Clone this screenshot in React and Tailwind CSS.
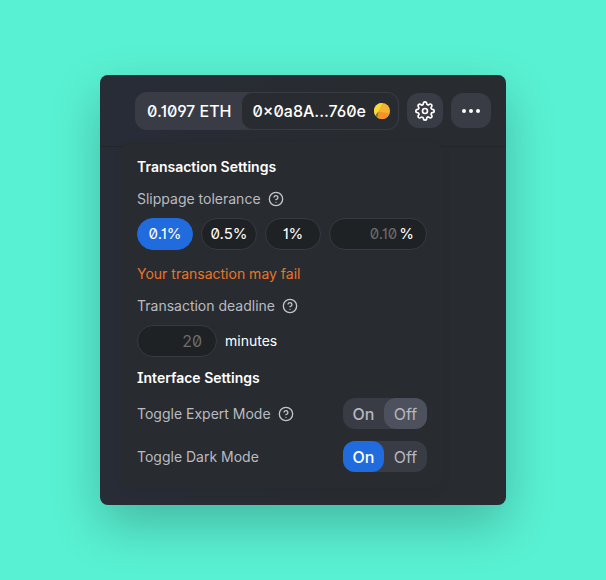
import { HelpCircle, MoreHorizontal } from "lucide-react";

function Help({ label }) {
  return (
    <button type="button" aria-label={label} className="flex size-4 items-center justify-center text-[#c3c5cb]">
      <HelpCircle size={16} strokeWidth={2} />
    </button>
  );
}

function SlippageOption({ children, active }) {
  return (
    <button
      type="button"
      aria-pressed={!!active}
      className={
        "h-8 w-14 rounded-full border text-[15px] text-white " +
        (active ? "border-[#206bdd] bg-[#206bdd]" : "border-[#373a43] bg-[#1f2224]")
      }
    >
      {children}
    </button>
  );
}

function Toggle({ on, label }) {
  return (
    <button
      type="button"
      role="switch"
      aria-checked={on}
      aria-label={label}
      className="flex h-[31px] w-[84px] rounded-xl bg-[#393c45] text-base text-[#b5b7be]"
    >
      <span
        className={
          "flex h-full w-[41px] items-center justify-center rounded-xl font-medium " +
          (on ? "bg-[#206bdd] text-white" : "")
        }
      >
        On
      </span>
      <span className={"flex h-full flex-1 items-center justify-center rounded-xl " + (on ? "" : "bg-[#4d505d]")}>
        Off
      </span>
    </button>
  );
}

function Avatar() {
  return (
    <svg viewBox="0 0 16 16" className="size-4 rounded-full" aria-hidden="true">
      <rect width="16" height="16" fill="#f3b52f" />
      <path d="M0 0H8.500L2 13L0 14Z" fill="#f6dc32" />
      <path d="M4.500 8.500L16 10.500V16H3Z" fill="#f7922a" />
      <path d="M0 14L4.500 8.500L3 16H0Z" fill="#5e7a3c" />
    </svg>
  );
}

export default function App() {
  return (
    <div className="min-h-screen bg-[#59f1d3] px-[100px] py-[75px] font-['Inter',sans-serif] [font-feature-settings:'zero','ss01','cv01','cv08']">
      <div className="overflow-hidden rounded-lg bg-[#282b2f] bg-linear-to-r from-[#272c37] from-0% to-[#282b2f] to-70% pb-[17px] shadow-[0_20px_50px_rgba(0,0,0,0.23)]">
        <header className="flex h-[72px] items-center justify-end gap-2 border-b border-[#24272a] pr-[15px]">
          <div className="flex h-[38px] items-center rounded-xl bg-[#393c45] text-base font-medium whitespace-nowrap text-white">
            <span className="pr-[9px] pl-3">0.1097 ETH</span>
            <button
              type="button"
              className="flex h-full items-center gap-2 rounded-xl border border-[#393c45] bg-[#282b2f] pr-2 pl-[11px]"
            >
              0×0a8A...760e
              <Avatar />
            </button>
          </div>
          <button
            type="button"
            aria-label="Settings"
            className="flex h-[35px] w-9 items-center justify-center rounded-xl bg-[#393c45] text-white"
          >
            <svg viewBox="0 0 24 24" className="size-5" fill="none" stroke="currentColor" strokeWidth="2" strokeLinecap="round" strokeLinejoin="round" aria-hidden="true">
              <circle cx="12" cy="12" r="3" />
              <path d="M19.4 15a1.65 1.65 0 0 0 .33 1.82l.06.06a2 2 0 0 1 0 2.83 2 2 0 0 1-2.83 0l-.06-.06a1.65 1.65 0 0 0-1.82-.33 1.65 1.65 0 0 0-1 1.51V21a2 2 0 0 1-2 2 2 2 0 0 1-2-2v-.09A1.65 1.65 0 0 0 9 19.4a1.65 1.65 0 0 0-1.82.33l-.06.06a2 2 0 0 1-2.83 0 2 2 0 0 1 0-2.83l.06-.06a1.65 1.65 0 0 0 .33-1.82 1.65 1.65 0 0 0-1.51-1H3a2 2 0 0 1-2-2 2 2 0 0 1 2-2h.09A1.65 1.65 0 0 0 4.6 9a1.65 1.65 0 0 0-.33-1.82l-.06-.06a2 2 0 0 1 0-2.83 2 2 0 0 1 2.83 0l.06.06a1.65 1.65 0 0 0 1.82.33H9a1.65 1.65 0 0 0 1-1.51V3a2 2 0 0 1 2-2 2 2 0 0 1 2 2v.09a1.65 1.65 0 0 0 1 1.51 1.65 1.65 0 0 0 1.82-.33l.06-.06a2 2 0 0 1 2.83 0 2 2 0 0 1 0 2.83l-.06.06a1.65 1.65 0 0 0-.33 1.82V9a1.65 1.65 0 0 0 1.51 1H21a2 2 0 0 1 2 2 2 2 0 0 1-2 2h-.09a1.65 1.65 0 0 0-1.51 1z" />
            </svg>
          </button>
          <button
            type="button"
            aria-label="More"
            className="flex h-[35px] w-10 items-center justify-center rounded-xl bg-[#393c45] text-white"
          >
            <MoreHorizontal size={24} strokeWidth={2} fill="currentColor" />
          </button>
        </header>

        <section className="relative -mt-[5px] mr-[63px] ml-[21px] rounded-xl bg-[#282b2f] p-4 text-sm leading-[18px] text-[#b9bbc1] shadow-[0_4px_12px_rgba(0,0,0,0.04)]">
          <h2 className="font-semibold text-white">Transaction Settings</h2>

          <div className="mt-[14px] flex items-center gap-[7px]">
            <span>Slippage tolerance</span>
            <Help label="About slippage tolerance" />
          </div>
          <div className="mt-[10px] flex gap-2">
            <SlippageOption active>0.1%</SlippageOption>
            <SlippageOption>0.5%</SlippageOption>
            <SlippageOption>1%</SlippageOption>
            <label className="flex h-8 min-w-0 flex-1 items-center gap-0.5 rounded-full border border-[#373a43] bg-[#1f2224] px-3 text-[15px] text-white">
              <input
                type="text"
                aria-label="Custom slippage"
                placeholder="0.10"
                className="w-0 min-w-0 flex-1 bg-transparent text-right outline-none placeholder:text-[#6b6c6e]"
              />
              %
            </label>
          </div>
          <p className="mt-[15px] text-[#ea7429]">Your transaction may fail</p>

          <div className="mt-[14px] flex items-center gap-[7px]">
            <label htmlFor="deadline">Transaction deadline</label>
            <Help label="About transaction deadline" />
          </div>
          <div className="mt-[10px] flex items-center gap-2 text-white">
            <input
              id="deadline"
              type="text"
              placeholder="20"
              className="h-8 w-20 rounded-full border border-[#373a43] bg-[#1f2224] px-[14px] text-right text-base outline-none placeholder:text-[#6b6c6e]"
            />
            <span>minutes</span>
          </div>

          <h2 className="mt-3 font-semibold text-white">Interface Settings</h2>
          <div className="mt-[11px] flex items-center justify-between">
            <div className="flex items-center gap-[7px]">
              <span>Toggle Expert Mode</span>
              <Help label="About expert mode" />
            </div>
            <Toggle label="Expert mode" on={false} />
          </div>
          <div className="mt-3 flex items-center justify-between">
            <span>Toggle Dark Mode</span>
            <Toggle label="Dark mode" on />
          </div>
        </section>
      </div>
    </div>
  );
}
